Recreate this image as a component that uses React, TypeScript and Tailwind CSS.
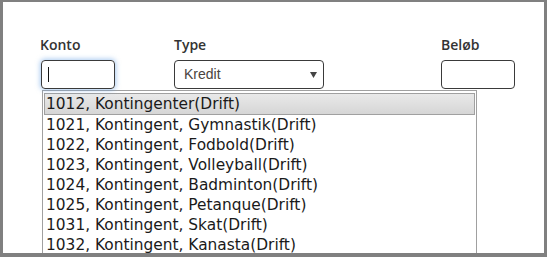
import React from "react";

const items = [
  "1012, Kontingenter(Drift)",
  "1021, Kontingent, Gymnastik(Drift)",
  "1022, Kontingent, Fodbold(Drift)",
  "1023, Kontingent, Volleyball(Drift)",
  "1024, Kontingent, Badminton(Drift)",
  "1025, Kontingent, Petanque(Drift)",
  "1031, Kontingent, Skat(Drift)",
  "1032, Kontingent, Kanasta(Drift)",
];

export default function App() {
  return (
    <div className="w-[547px] h-[257px] bg-white border-[#808080] border-l-[3px] border-r-[3px] border-t-[2px] border-b-[4px] overflow-hidden">
      <div className="pl-[38px] pt-[33px] relative">
        <div className="flex">
          <div className="w-[133px] flex flex-col">
            <label className="text-[14px] font-semibold text-[#333] leading-[20px] mb-[5px] font-['Open_Sans',sans-serif] -ml-[1px]">Konto</label>
            <div className="w-[74px] h-[29px] rounded-[4px] border border-[#3a3a3a] shadow-[0_0_5px_1px_rgba(100,160,230,0.55)] flex items-center pl-[6px]">
              <div className="w-[1px] h-[15px] bg-[#111]" />
            </div>
          </div>
          <div className="w-[267px] flex flex-col">
            <label className="text-[14px] font-semibold text-[#333] leading-[20px] mb-[5px] font-['Open_Sans',sans-serif]">Type</label>
            <div className="w-[150px] h-[29px] rounded-[4px] border border-[#3a3a3a] flex items-center justify-between pl-[9px] pr-[6px]">
              <span className="text-[14px] text-[#4a4440] font-['Liberation_Sans',Arial,sans-serif]">Kredit</span>
              <svg width="7" height="6" viewBox="0 0 7 6" className="mt-[1px]">
                <path d="M0 0 H7 L3.5 6 Z" fill="#444" />
              </svg>
            </div>
          </div>
          <div className="flex flex-col">
            <label className="text-[14px] font-semibold text-[#333] leading-[20px] mb-[5px] font-['Open_Sans',sans-serif]">Beløb</label>
            <div className="w-[74px] h-[29px] rounded-[4px] border border-[#3a3a3a]" />
          </div>
        </div>
        <div className="mt-[1px] w-[435px] border border-[#a0a0a0] bg-white pt-[2px] px-[1px] font-['DejaVu_Sans',Verdana,sans-serif] text-[15.4px] text-[#1a1a1a] ml-[1px]">
          {items.map((t, i) => (
            <div
              key={t}
              className={
                i === 0
                  ? "h-[22px] leading-[20px] border border-[#a0a0a0] bg-gradient-to-b from-[#e9e9e9] to-[#d6d6d6] pl-[1px] whitespace-nowrap"
                  : "h-[20px] leading-[20px] pl-[2px] whitespace-nowrap"
              }
            >
              {t}
            </div>
          ))}
        </div>
      </div>
    </div>
  );
}
